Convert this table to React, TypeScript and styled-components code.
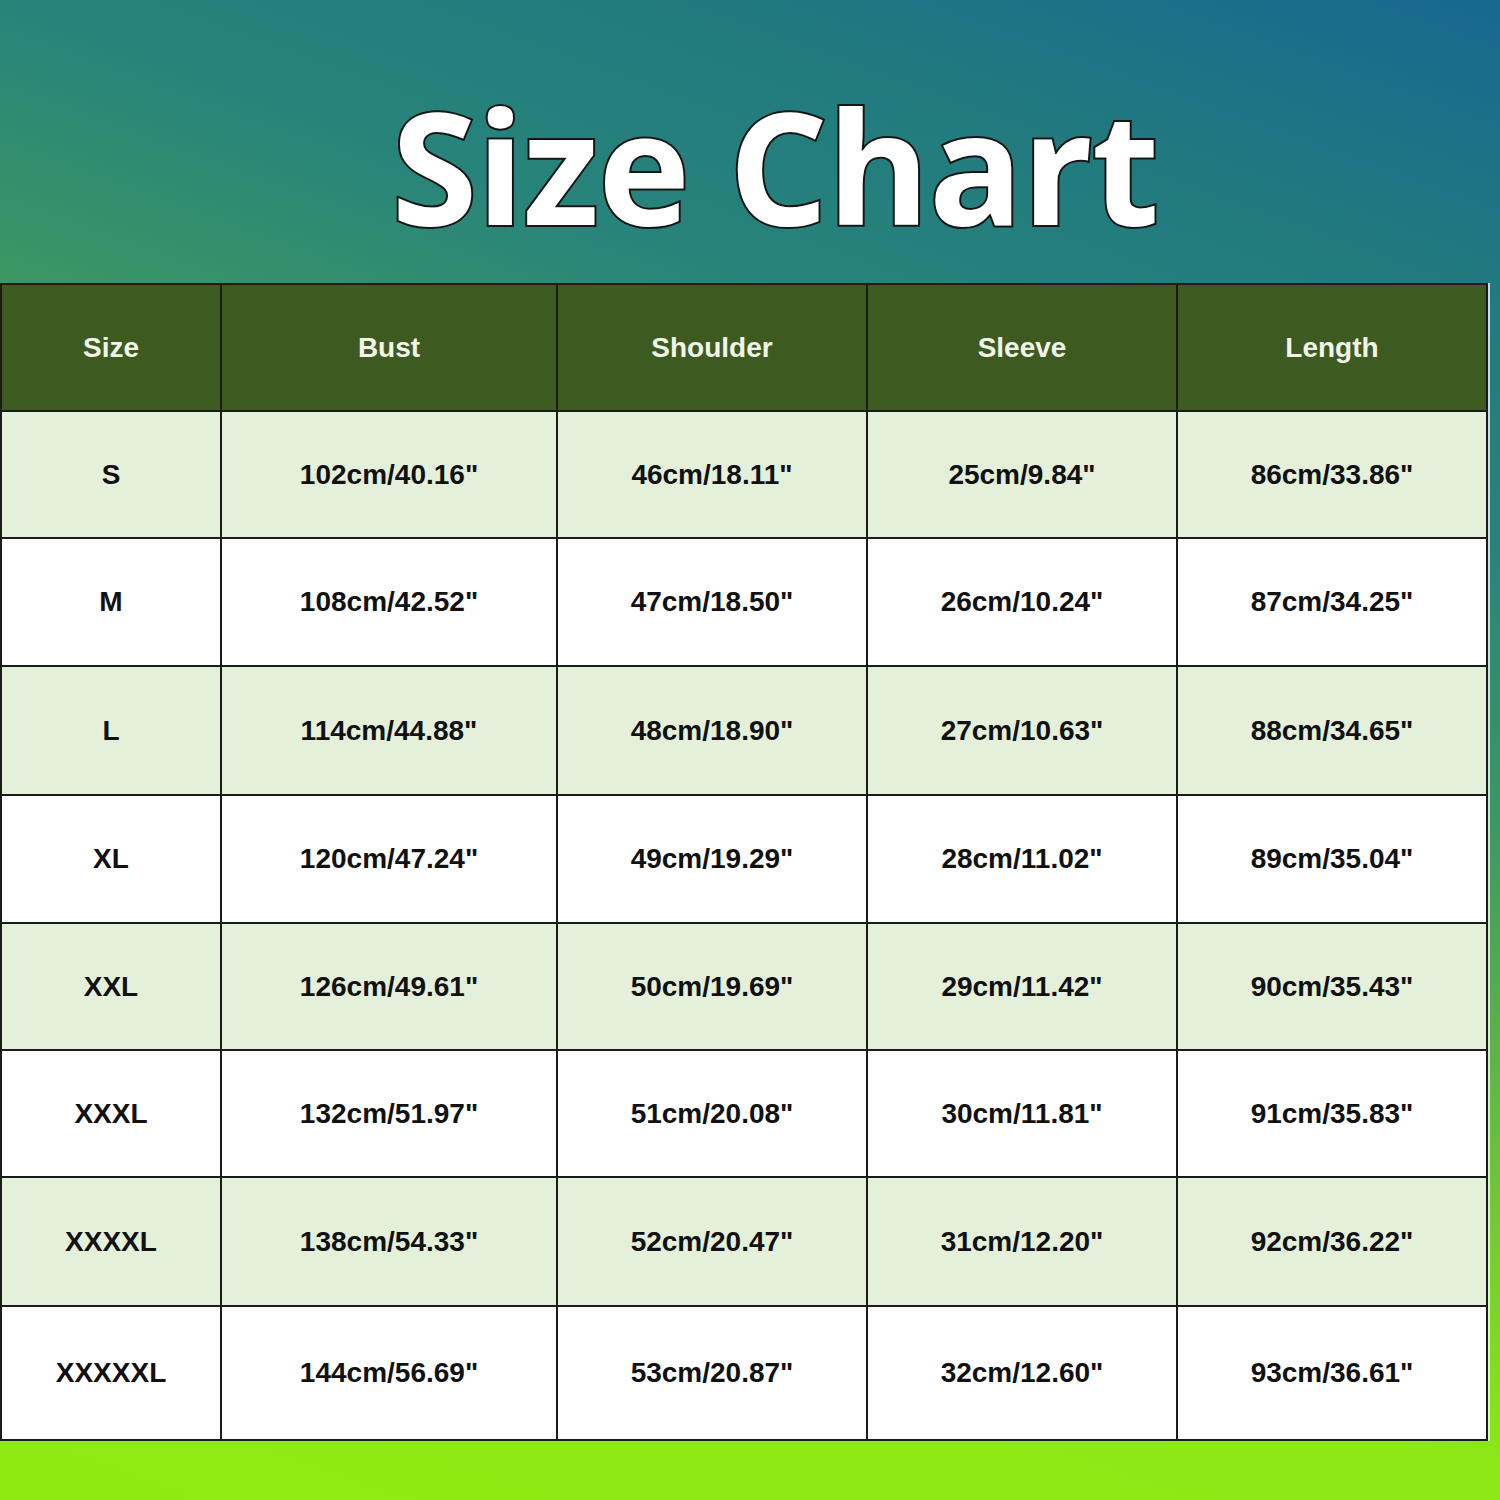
import React from 'react'
import styled, { createGlobalStyle } from 'styled-components'

const GlobalStyle = createGlobalStyle`
    html, body {
        margin: 0;
        padding: 0;
    }
`

interface SizeRow {
    size: string
    bust: string
    shoulder: string
    sleeve: string
    length: string
}

const columns = ['Size', 'Bust', 'Shoulder', 'Sleeve', 'Length']

const rows: SizeRow[] = [
    { size: 'S', bust: '102cm/40.16"', shoulder: '46cm/18.11"', sleeve: '25cm/9.84"', length: '86cm/33.86"' },
    { size: 'M', bust: '108cm/42.52"', shoulder: '47cm/18.50"', sleeve: '26cm/10.24"', length: '87cm/34.25"' },
    { size: 'L', bust: '114cm/44.88"', shoulder: '48cm/18.90"', sleeve: '27cm/10.63"', length: '88cm/34.65"' },
    { size: 'XL', bust: '120cm/47.24"', shoulder: '49cm/19.29"', sleeve: '28cm/11.02"', length: '89cm/35.04"' },
    { size: 'XXL', bust: '126cm/49.61"', shoulder: '50cm/19.69"', sleeve: '29cm/11.42"', length: '90cm/35.43"' },
    { size: 'XXXL', bust: '132cm/51.97"', shoulder: '51cm/20.08"', sleeve: '30cm/11.81"', length: '91cm/35.83"' },
    { size: 'XXXXL', bust: '138cm/54.33"', shoulder: '52cm/20.47"', sleeve: '31cm/12.20"', length: '92cm/36.22"' },
    { size: 'XXXXXL', bust: '144cm/56.69"', shoulder: '53cm/20.87"', sleeve: '32cm/12.60"', length: '93cm/36.61"' },
]

// row heights between the grid lines, header first
const rowHeights = [125, 125, 126, 127, 126, 125, 125, 127, 132]

const App: React.FC = () => {
    return (
        <Page>
            <GlobalStyle />
            <TitleBar>
                <Title>Size Chart</Title>
            </TitleBar>
            <Chart style={{ gridTemplateRows: rowHeights.map(h => `${h}px`).join(' ') }}>
                {columns.map(col => (
                    <HeadCell key={col}>{col}</HeadCell>
                ))}
                {rows.map((row, index) => {
                    const shaded = index % 2 === 0
                    return (
                        <React.Fragment key={row.size}>
                            <Cell shaded={shaded}>{row.size}</Cell>
                            <Cell shaded={shaded}>{row.bust}</Cell>
                            <Cell shaded={shaded}>{row.shoulder}</Cell>
                            <Cell shaded={shaded}>{row.sleeve}</Cell>
                            <Cell shaded={shaded}>{row.length}</Cell>
                        </React.Fragment>
                    )
                })}
            </Chart>
        </Page>
    )
}

const Page = styled.div`
    width: 1500px;
    height: 1500px;
    overflow: hidden;
    background: linear-gradient(200deg, #186890 0%, #21797f 14%, #28847a 27%, #3b9764 40%, #6fc43a 58%, #8ee816 72%, #90ea12 100%);
`

const TitleBar = styled.div`
    height: 283px;
    box-sizing: border-box;
    padding: 87px 0 0 50px;
    display: flex;
    justify-content: center;
`

const Title = styled.h1`
    margin: 0;
    font-family: 'Open Sans', 'Noto Sans', sans-serif;
    font-weight: 700;
    font-size: 156px;
    line-height: 1;
    color: #ffffff;
    -webkit-text-stroke: 4px #151515;
    paint-order: stroke fill;
    letter-spacing: -1px;
`

const Chart = styled.div`
    width: 1488px;
    box-sizing: border-box;
    display: grid;
    grid-template-columns: 218px 334px 308px 308px 308px;
    gap: 2px;
    padding: 2px;
    background: #1b1b1b;
    box-shadow: 2px 0 0 rgba(255, 255, 255, 0.75);
`

const HeadCell = styled.div`
    display: flex;
    align-items: center;
    justify-content: center;
    background: #3d5b20;
    color: #f2f6ea;
    font-family: 'Liberation Sans', Arial, sans-serif;
    font-weight: 700;
    font-size: 28px;
`

const Cell = styled.div<{ shaded: boolean }>`
    display: flex;
    align-items: center;
    justify-content: center;
    background: ${props => (props.shaded ? '#e4f0da' : '#ffffff')};
    color: #111111;
    font-family: 'Liberation Sans', Arial, sans-serif;
    font-weight: 700;
    font-size: 28px;
`

export default App
